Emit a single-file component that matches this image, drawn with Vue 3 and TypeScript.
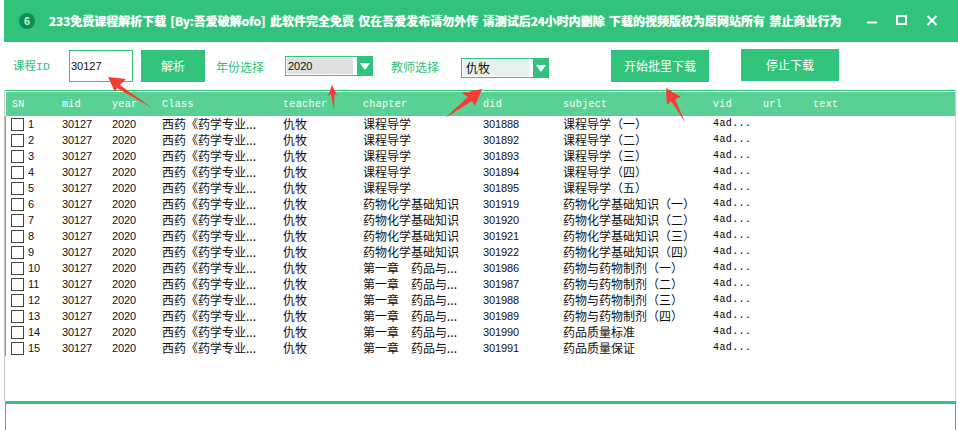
<script setup lang="ts">
const columns: string[] = ['SN', 'mid', 'year', 'Class', 'teacher', 'chapter', 'did', 'subject', 'vid', 'url', 'text']
const intro = '课程导学'
const base = '药物化学基础知识'
const firstChapter = '第一章　药品与...'
const source: [string, string, string][] = [
  [intro, '301888', '课程导学（一）'],
  [intro, '301892', '课程导学（二）'],
  [intro, '301893', '课程导学（三）'],
  [intro, '301894', '课程导学（四）'],
  [intro, '301895', '课程导学（五）'],
  [base, '301919', '药物化学基础知识（一）'],
  [base, '301920', '药物化学基础知识（二）'],
  [base, '301921', '药物化学基础知识（三）'],
  [base, '301922', '药物化学基础知识（四）'],
  [firstChapter, '301986', '药物与药物制剂（一）'],
  [firstChapter, '301987', '药物与药物制剂（二）'],
  [firstChapter, '301988', '药物与药物制剂（三）'],
  [firstChapter, '301989', '药物与药物制剂（四）'],
  [firstChapter, '301990', '药品质量标准'],
  [firstChapter, '301991', '药品质量保证'],
]
const rows = source.map(([chapter, did, subject], i) => ({ sn: i + 1, chapter, did, subject }))
</script>

<template>
  <div class="app">
    <header class="titlebar">
      <span class="logo">6</span>
      <span class="title">233免费课程解析下载 [By:吾爱破解ofo] 此软件完全免费 仅在吾爱发布请勿外传 请测试后24小时内删除 下载的视频版权为原网站所有 禁止商业行为</span>
      <div class="controls">
        <svg width="90" height="16" viewBox="0 0 90 16">
          <path d="M2 8.5H12" class="ctl" />
          <rect x="32" y="2" width="9" height="8" class="ctl" />
          <path d="M62.5 2L71.5 11M71.5 2L62.5 11" class="ctl" />
        </svg>
      </div>
    </header>

    <section class="toolbar">
      <span class="label label-id">课程ID</span>
      <div class="input">30127</div>
      <button class="btn btn-parse">解析</button>
      <span class="label label-year">年份选择</span>
      <div class="select select-year">
        <span class="select-text year-text">2020</span>
        <span class="arrow"><i></i></span>
      </div>
      <span class="label label-teacher">教师选择</span>
      <div class="select select-teacher">
        <span class="select-text teacher-text">仇牧</span>
        <span class="arrow"><i></i></span>
      </div>
      <button class="btn btn-start">开始批里下载</button>
      <button class="btn btn-stop">停止下载</button>
    </section>

    <section class="list">
      <div class="thead">
        <span v-for="c in columns" :key="c" class="th">{{ c }}</span>
      </div>
      <div class="tbody">
        <div v-for="r in rows" :key="r.sn" class="row">
          <span class="cell sn"><i class="check"></i>{{ r.sn }}</span>
          <span class="cell">30127</span>
          <span class="cell">2020</span>
          <span class="cell cjk">西药《药学专业...</span>
          <span class="cell cjk">仇牧</span>
          <span class="cell cjk">{{ r.chapter }}</span>
          <span class="cell">{{ r.did }}</span>
          <span class="cell cjk">{{ r.subject }}</span>
          <span class="cell vid">4ad...</span>
          <span class="cell"></span>
          <span class="cell"></span>
        </div>
      </div>
    </section>
    <section class="log"></section>

    <svg class="marks" width="958" height="430" viewBox="0 0 958 430">
      <polygon points="108,77 126,79 120,85 152,108 117,88 115,92" />
      <polygon points="332,85 337,95 334.5,94 334,110 331,94 328,96" />
      <polygon points="482,89 475,106 472,101 445,118 468,97 462,93" />
      <polygon points="666,88 681,97 675,99 685,122 671,101 667,105" />
    </svg>
  </div>
</template>

<style>
html, body { margin: 0; background: #fff; }
</style>

<style scoped>
.app {
  position: relative;
  width: 958px;
  height: 430px;
  overflow: hidden;
  background: #fff;
  font-family: "Liberation Sans", "Noto Sans CJK SC", sans-serif;
}
.titlebar {
  height: 42px;
  margin-left: 4px;
  background: #31c27c;
  display: flex;
  align-items: center;
  color: #fff;
  box-sizing: border-box;
}
.logo {
  width: 16px;
  height: 16px;
  margin-left: 15px;
  border-radius: 50%;
  background: #0f8f4f;
  color: #c8efd8;
  font: bold 11px/16px "Liberation Sans", sans-serif;
  text-align: center;
  flex: none;
}
.title {
  margin-left: 14px;
  font: bold 12px/16px "Noto Sans CJK SC", sans-serif;
  white-space: nowrap;
  flex: none;
  width: 795px;
  word-spacing: 1.6px;
  text-shadow: 0 0 1px #d8ffe8;
}
.controls { margin-left: 21px; margin-top: 2px; line-height: 0; }
.ctl { fill: none; stroke: #fff; stroke-width: 2; }

.toolbar {
  height: 48px;
  display: flex;
  align-items: flex-start;
}
.label {
  color: #2fbf7a;
  font: 12px/16px "Noto Sans CJK SC", sans-serif;
  white-space: nowrap;
  flex: none;
}
.label-id { margin: 17px 0 0 13px; width: 56px; font-family: "Liberation Mono", "Noto Sans CJK SC", monospace; font-size: 11.5px; }
.input {
  width: 64px;
  height: 32px;
  box-sizing: border-box;
  margin-top: 8px;
  border: 1px solid #31c27c;
  padding-left: 1px;
  font: 11px/30px "Liberation Sans", sans-serif;
  color: #111;
}
.btn {
  flex: none;
  height: 32px;
  border: 0;
  padding: 0;
  background: #31c27c;
  color: #fff;
  font: 12px/32px "Noto Sans CJK SC", sans-serif;
  margin-top: 8px;
}
.btn-parse { width: 64px; margin-left: 8px; }
.label-year { margin: 17px 0 0 11px; width: 69px; }
.select {
  flex: none;
  width: 88px;
  height: 20px;
  box-sizing: border-box;
  border: 1px solid #31c27c;
  display: flex;
  background: #fff;
}
.select-year { margin-top: 14px; }
.select-teacher { margin-top: 16px; }
.select-text {
  margin: 1px;
  width: 66px;
  padding-left: 1px;
  box-sizing: border-box;
  font-size: 11px;
  line-height: 16px;
  color: #111;
}
.year-text { background: #e0e0df; }
.teacher-text { background: #e6f1ef; font-family: "Noto Sans CJK SC", sans-serif; font-size: 12px; padding-left: 3px; }
.arrow {
  flex: none;
  width: 15px;
  margin-left: auto;
  background: #31c27c;
  display: flex;
  align-items: center;
  justify-content: center;
}
.arrow i {
  width: 0;
  height: 0;
  border-left: 5px solid transparent;
  border-right: 5px solid transparent;
  border-top: 7px solid #fff;
}
.label-teacher { margin: 17px 0 0 18px; width: 70px; }
.btn-start { width: 98px; margin-left: 62px; }
.btn-stop { width: 98px; margin-left: 32px; margin-top: 7px; }

.list {
  margin-left: 4px;
  margin-right: 2px;
  height: 311px;
  box-sizing: border-box;
  border-left: 1px solid #c8c8c8;
  border-right: 1px solid #d0d0d0;
  position: relative;
}
.list::before {
  content: "";
  display: block;
  height: 1px;
  background: #31c27c;
  margin-bottom: 1px;
}
.thead, .row {
  display: grid;
  grid-template-columns: 50px 50px 50px 121px 80px 120px 80px 150px 50px 50px 1fr;
}
.thead {
  height: 24px;
  margin-left: 1px;
  padding-left: 6px;
  background: #5ad194;
  color: #fff;
  align-items: center;
}
.th {
  font: 10px/26px "Liberation Mono", monospace;
  letter-spacing: 0.35px;
}
.tbody { border-left: 1px solid #31c27c; }
.row { height: 16px; align-items: center; padding-left: 6px; }
.cell {
  font: 11px/16px "Liberation Sans", sans-serif;
  letter-spacing: -0.1px;
  color: #111;
  white-space: nowrap;
}
.cjk { font: 12px/16px "Noto Sans CJK SC", sans-serif; letter-spacing: 0; }
.vid { font-family: "Liberation Mono", monospace; font-size: 10px; letter-spacing: 0.4px; color: #000; }
.sn { display: flex; align-items: center; }
.check {
  width: 13px;
  height: 13px;
  box-sizing: border-box;
  border: 1px solid #444;
  margin-left: -1px;
  margin-right: 4px;
}
.log {
  margin-left: 5px;
  margin-right: 2px;
  height: 29px;
  box-sizing: border-box;
  border-top: 3px solid #31c27c;
  border-left: 1px solid #31c27c;
  border-right: 1px solid #31c27c;
}
.marks {
  position: absolute;
  left: 0;
  top: 0;
  pointer-events: none;
}
.marks polygon { fill: #f83a34; }
</style>
